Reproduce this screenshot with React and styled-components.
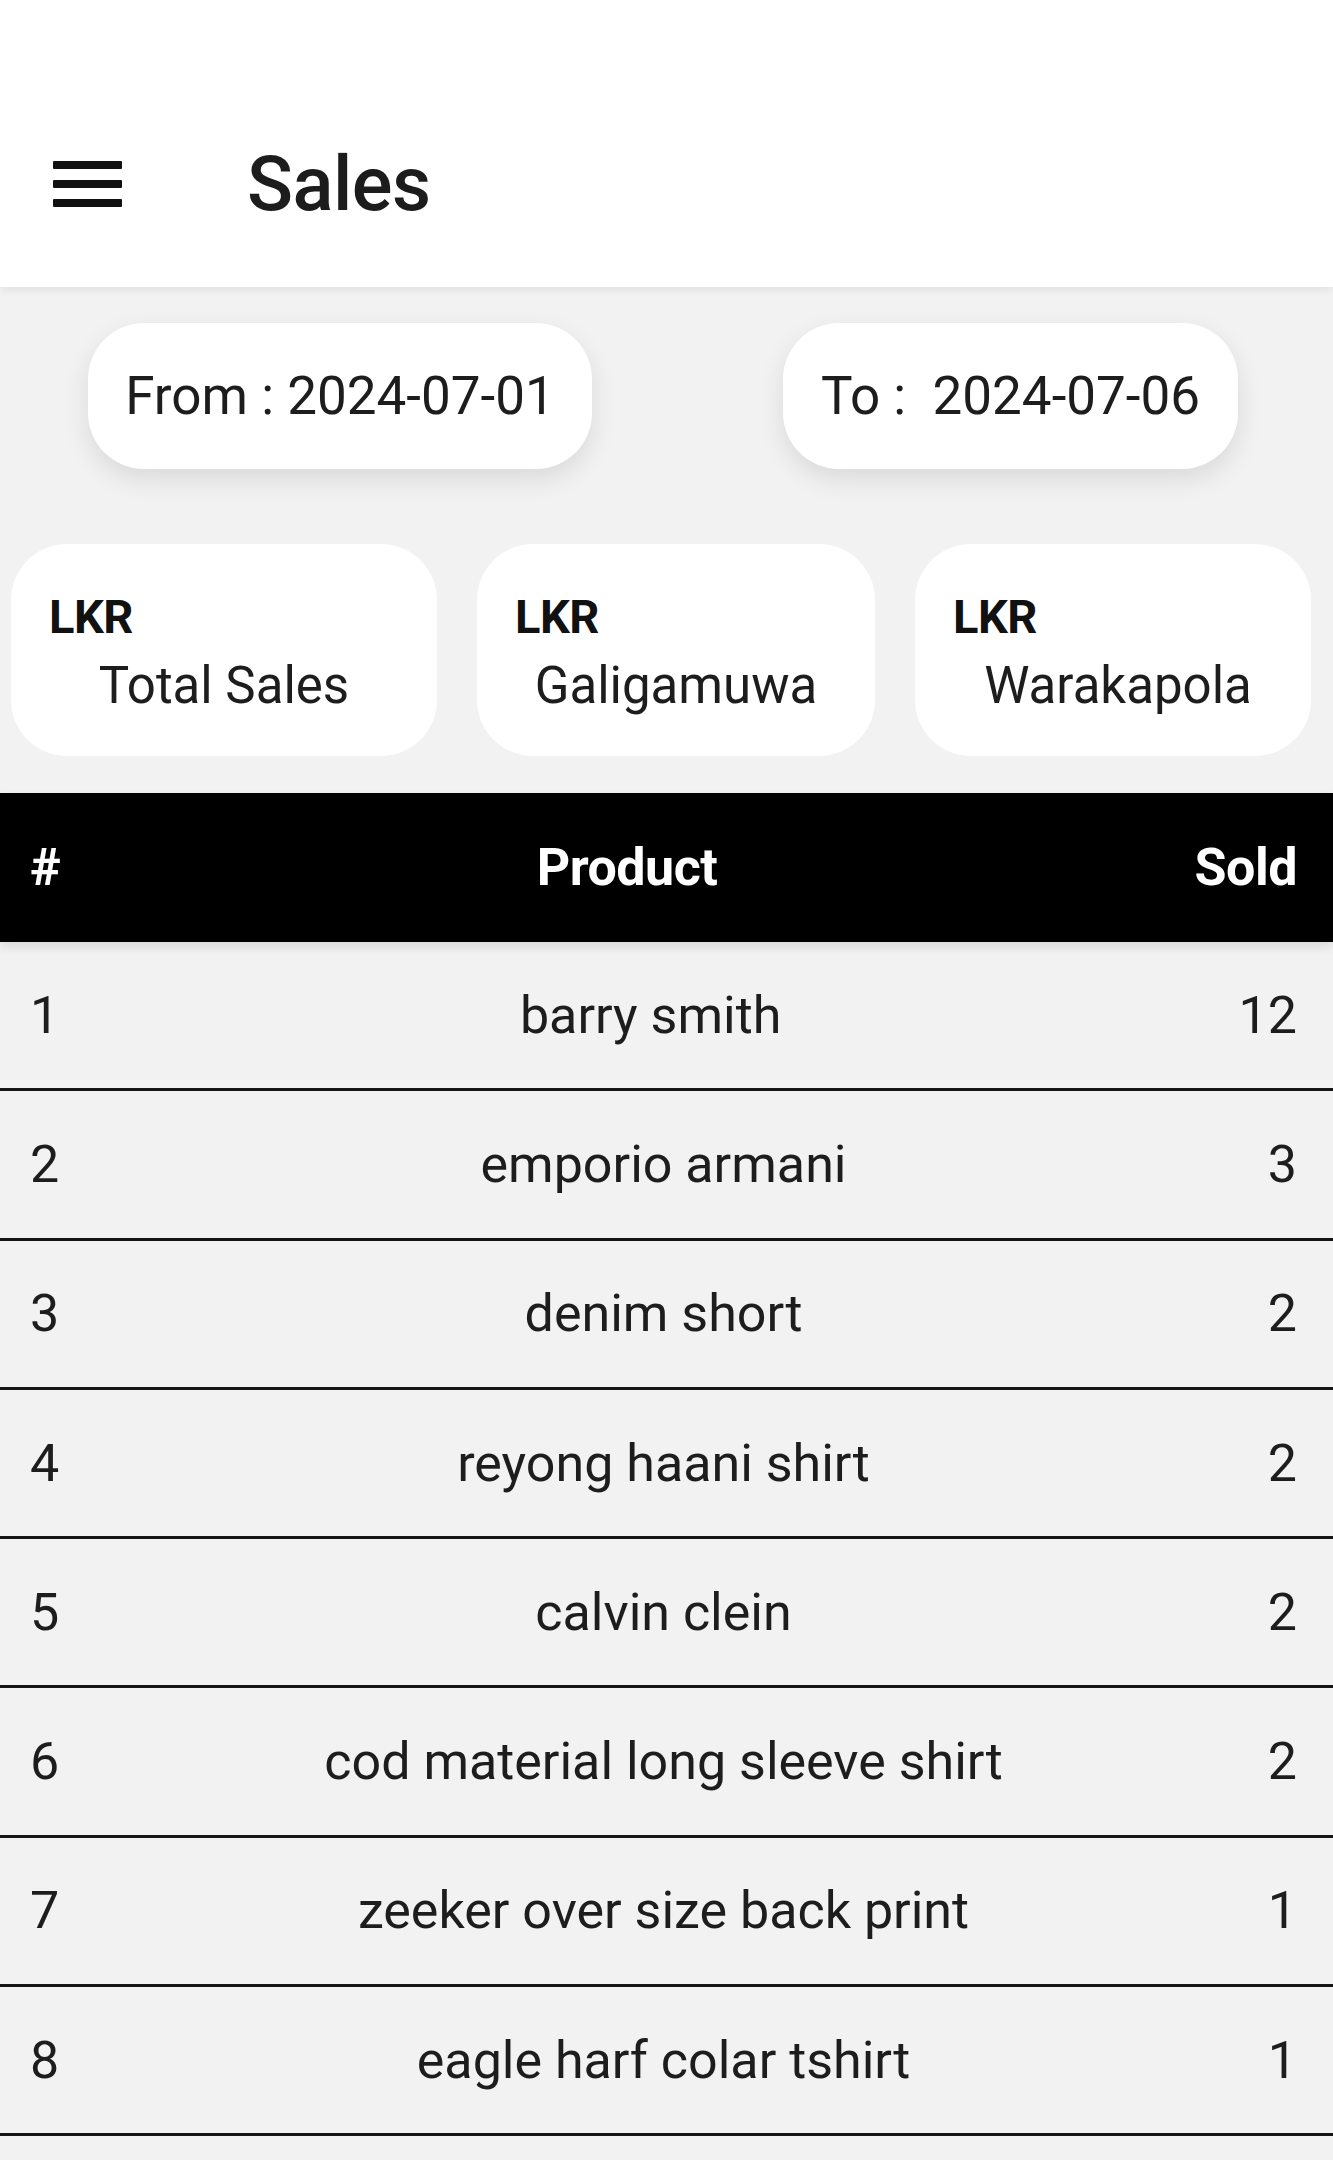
import React from "react";
import styled, { createGlobalStyle } from "styled-components";

const Global = createGlobalStyle`
  html, body { margin: 0; padding: 0; background: #f2f2f2; }
  body { font-family: Roboto, "Noto Sans", "Liberation Sans", sans-serif; color: #1d1d1d; }
  * { box-sizing: border-box; }
`;

const Page = styled.div`
  width: 1333px;
  min-height: 2160px;
  background: #f2f2f2;
  overflow: hidden;
`;

const AppBar = styled.header`
  height: 287px;
  background: #ffffff;
  display: flex;
  align-items: center;
  padding: 80px 0 0 53px;
  box-shadow: 0 3px 8px rgba(0, 0, 0, 0.07);
  position: relative;
  z-index: 2;
`;

const MenuButton = styled.div`
  width: 69px;
  height: 46px;
  display: flex;
  flex-direction: column;
  justify-content: space-between;
  margin-top: 0px;
`;

const Bar = styled.span`
  display: block;
  height: 8px;
  background: #111;
  border-radius: 1px;
`;

const Title = styled.h1`
  margin: 0 0 0 125px;
  font-size: 76px;
  font-weight: 500;
  color: #1c1c1c;
  letter-spacing: -0.5px;
`;

const DateRow = styled.div`
  display: flex;
  padding: 36px 0 0 88px;
  gap: 191px;
`;

const DatePill = styled.div`
  width: ${(p) => p.$w}px;
  height: 146px;
  background: #fff;
  border-radius: 56px;
  display: flex;
  align-items: center;
  justify-content: center;
  font-size: 53px;
  color: #1d1d1d;
  white-space: pre;
  box-shadow: 0 10px 26px rgba(0, 0, 0, 0.1);
`;

const CardRow = styled.div`
  display: flex;
  padding: 75px 0 0 11px;
  gap: 40px;
`;

const Card = styled.div`
  width: ${(p) => p.$w}px;
  height: 212px;
  background: #fff;
  border-radius: 56px;
  padding: 45px 38px 0 38px;
  display: flex;
  flex-direction: column;
  gap: 12px;
`;

const Currency = styled.div`
  font-size: 47px;
  font-weight: 700;
  color: #111;
  letter-spacing: -0.5px;
`;

const CardLabel = styled.div`
  font-size: 51px;
  text-align: center;
  color: #1d1d1d;
  margin: 0 -38px;
  padding-left: ${(p) => p.$shift || 0}px;
`;

const Table = styled.div`
  margin-top: 37px;
`;

const HeadRow = styled.div`
  display: grid;
  grid-template-columns: 120px 1fr 120px;
  align-items: center;
  height: 149px;
  padding: 0 36px 0 30px;
  background: #000;
  color: #fff;
  font-size: 52px;
  font-weight: 700;
  letter-spacing: -0.5px;
  box-shadow: 0 5px 10px rgba(0, 0, 0, 0.1);
  position: relative;
  z-index: 1;
`;

const Row = styled.div`
  display: grid;
  grid-template-columns: 120px 1fr 120px;
  align-items: center;
  height: 149.3px;
  padding: 0 36px 0 30px;
  border-bottom: 3px solid #151515;
  font-size: 52px;
  color: #1d1d1d;
`;

const Cell = styled.div`
  text-align: ${(p) => p.$align || "left"};
  padding-right: ${(p) => p.$pr || 0}px;
  white-space: pre;
`;

const rows = [
  ["1", "barry smith  ", "12"],
  ["2", "emporio armani", "3"],
  ["3", "denim short", "2"],
  ["4", "reyong haani shirt", "2"],
  ["5", "calvin clein", "2"],
  ["6", "cod material long sleeve shirt", "2"],
  ["7", "zeeker over size back print", "1"],
  ["8", "eagle harf colar tshirt", "1"],
];

export default function App() {
  return (
    <Page>
      <Global />
      <AppBar>
        <MenuButton>
          <Bar />
          <Bar />
          <Bar />
        </MenuButton>
        <Title>Sales</Title>
      </AppBar>

      <DateRow>
        <DatePill $w={504}>From : 2024-07-01</DatePill>
        <DatePill $w={455}>To :  2024-07-06</DatePill>
      </DateRow>

      <CardRow>
        <Card $w={426}>
          <Currency>LKR</Currency>
          <CardLabel>Total Sales</CardLabel>
        </Card>
        <Card $w={398}>
          <Currency>LKR</Currency>
          <CardLabel>Galigamuwa</CardLabel>
        </Card>
        <Card $w={396}>
          <Currency>LKR</Currency>
          <CardLabel $shift={10}>Warakapola</CardLabel>
        </Card>
      </CardRow>

      <Table>
        <HeadRow>
          <Cell>#</Cell>
          <Cell $align="center" $pr={73}>Product</Cell>
          <Cell $align="right">Sold</Cell>
        </HeadRow>
        {rows.map(([n, name, sold]) => (
          <Row key={n}>
            <Cell>{n}</Cell>
            <Cell $align="center">{name}</Cell>
            <Cell $align="right">{sold}</Cell>
          </Row>
        ))}
      </Table>
    </Page>
  );
}
